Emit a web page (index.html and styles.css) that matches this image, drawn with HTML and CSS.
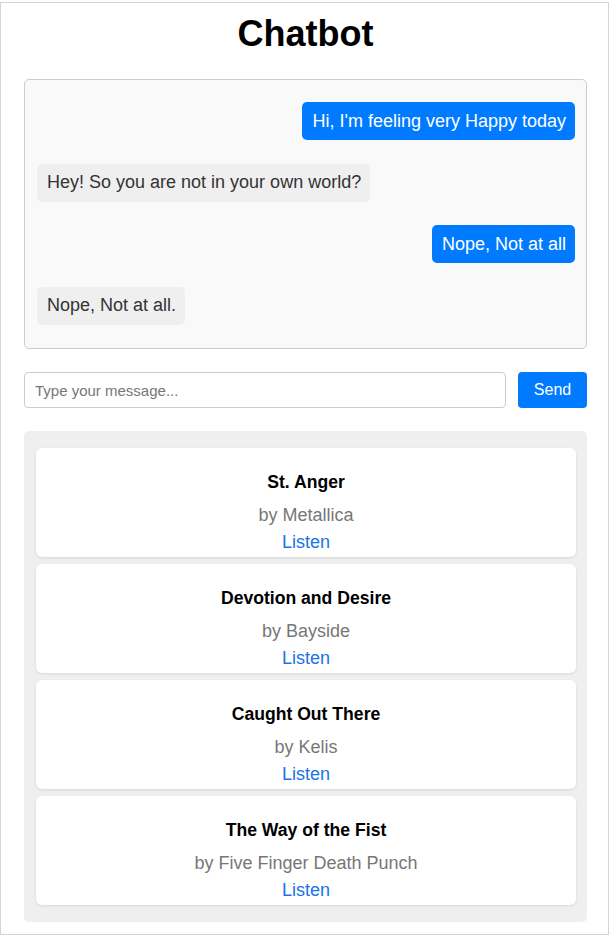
FILE: index.html
```html
<!DOCTYPE html>
<html>
<head>
<meta charset="utf-8">
<title>Chatbot</title>
<link rel="stylesheet" href="styles.css">
</head>
<body>
<div class="app">
  <h1 class="title">Chatbot</h1>
  <div class="chat">
    <div class="msg user"><span class="bubble">Hi, I'm feeling very Happy today</span></div>
    <div class="msg bot"><span class="bubble">Hey! So you are not in your own world?</span></div>
    <div class="msg user"><span class="bubble">Nope, Not at all</span></div>
    <div class="msg bot"><span class="bubble">Nope, Not at all.</span></div>
  </div>
  <div class="composer">
    <input class="input" type="text" placeholder="Type your message...">
    <button class="send">Send</button>
  </div>
  <div class="songs">
    <div class="card">
      <h3 class="song">St. Anger</h3>
      <p class="artist">by Metallica</p>
      <a class="listen" href="#">Listen</a>
    </div>
    <div class="card">
      <h3 class="song">Devotion and Desire</h3>
      <p class="artist">by Bayside</p>
      <a class="listen" href="#">Listen</a>
    </div>
    <div class="card">
      <h3 class="song">Caught Out There</h3>
      <p class="artist">by Kelis</p>
      <a class="listen" href="#">Listen</a>
    </div>
    <div class="card">
      <h3 class="song">The Way of the Fist</h3>
      <p class="artist">by Five Finger Death Punch</p>
      <a class="listen" href="#">Listen</a>
    </div>
  </div>
</div>
</body>
</html>
```
FILE: styles.css
```css
* { box-sizing: border-box; }
html, body {
  margin: 0;
  padding: 0;
  background: #ffffff;
}
body {
  font-family: "Liberation Sans", Arial, sans-serif;
  padding: 2px 1px 0 0;
}
.app {
  width: 609px;
  height: 933px;
  border: 1px solid #d4d4d4;
  padding: 0 21px 0 23px;
  background: #fff;
}
.title {
  margin: 10px 0 0;
  height: 66px;
  font-size: 36px;
  font-weight: bold;
  text-align: center;
  line-height: 42px;
  color: #000;
}
.chat {
  background: #f9f9f9;
  border: 1px solid #cccccc;
  border-radius: 5px;
  padding: 22px 11px 20.5px 12px;
  display: flex;
  flex-direction: column;
  gap: 23.5px;
  height: 270px;
}
.msg { display: flex; }
.msg.user { justify-content: flex-end; }
.msg.bot { justify-content: flex-start; }
.bubble {
  font-size: 18px;
  line-height: 21px;
  padding: 8.5px 9px 8.5px 10px;
  border-radius: 5px;
}
.user .bubble {
  background: #007bff;
  color: #fff;
}
.bot .bubble {
  background: #efefef;
  color: #333;
}
.composer {
  display: flex;
  gap: 12px;
  margin-top: 23px;
}
.input {
  flex: 1;
  height: 36px;
  border: 1px solid #cccccc;
  border-radius: 4px;
  padding: 0 10px;
  font-family: "Liberation Sans", Arial, sans-serif;
  font-size: 15px;
  color: #333;
}
.input::placeholder { color: #777; }
.send {
  width: 69px;
  height: 36px;
  border: none;
  border-radius: 4px;
  background: #007bff;
  color: #fff;
  font-family: "Liberation Sans", Arial, sans-serif;
  font-size: 16px;
}
.songs {
  margin-top: 23px;
  background: #efefef;
  border-radius: 5px;
  padding: 17px 11px 17px 12px;
  display: flex;
  flex-direction: column;
  gap: 7px;
}
.card {
  background: #fff;
  border-radius: 6px;
  box-shadow: 0 1px 3px rgba(0,0,0,0.1);
  height: 109px;
  padding: 6px 12px 4px;
  text-align: center;
}
.song {
  margin: 17.5px 0 12px;
  font-size: 17.6px;
  line-height: 21px;
  font-weight: bold;
  color: #000;
}
.artist {
  margin: 0 0 6px;
  font-size: 18px;
  line-height: 21px;
  color: #777;
}
.listen {
  display: block;
  font-size: 18px;
  line-height: 21px;
  color: #1a73e8;
  text-decoration: none;
}
```
